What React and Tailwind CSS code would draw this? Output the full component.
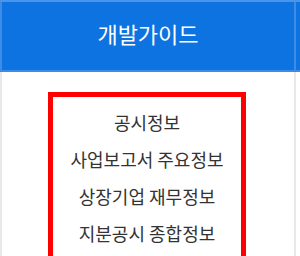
import React from 'react';

const items = ['공시정보', '사업보고서 주요정보', '상장기업 재무정보', '지분공시 종합정보'];

export default function App() {
  return (
    <div
      className="w-[300px] h-[256px] overflow-hidden bg-white"
      style={{ fontFamily: '"Noto Sans CJK KR", "Noto Sans", sans-serif' }}
    >
      {/* Header */}
      <div className="flex h-[72px] bg-[#0d73e0] border-t-2 border-[#4a95ea]">
        <div className="w-[296px] flex items-center justify-center border-x-2 border-[#3d8ce8] border-b-2 border-b-[#3d8ce8]">
          <h2 className="text-[22px] text-white leading-none -mt-[6px]">개발가이드</h2>
        </div>
        <div className="flex-1 border-b-2 border-[#3d8ce8]" />
      </div>

      {/* Body */}
      <div className="w-[296px] h-[184px] border-x-2 border-[#e8e8e8] pt-[20px] pl-[46px]">
        <div className="w-[198px] h-[200px] border-[5px] border-[#ff0000] pt-[14px] flex flex-col items-center gap-[15px]">
          {items.map((t) => (
            <span key={t} className="text-[18px] leading-[22px] text-[#333333]">
              {t}
            </span>
          ))}
        </div>
      </div>
    </div>
  );
}
